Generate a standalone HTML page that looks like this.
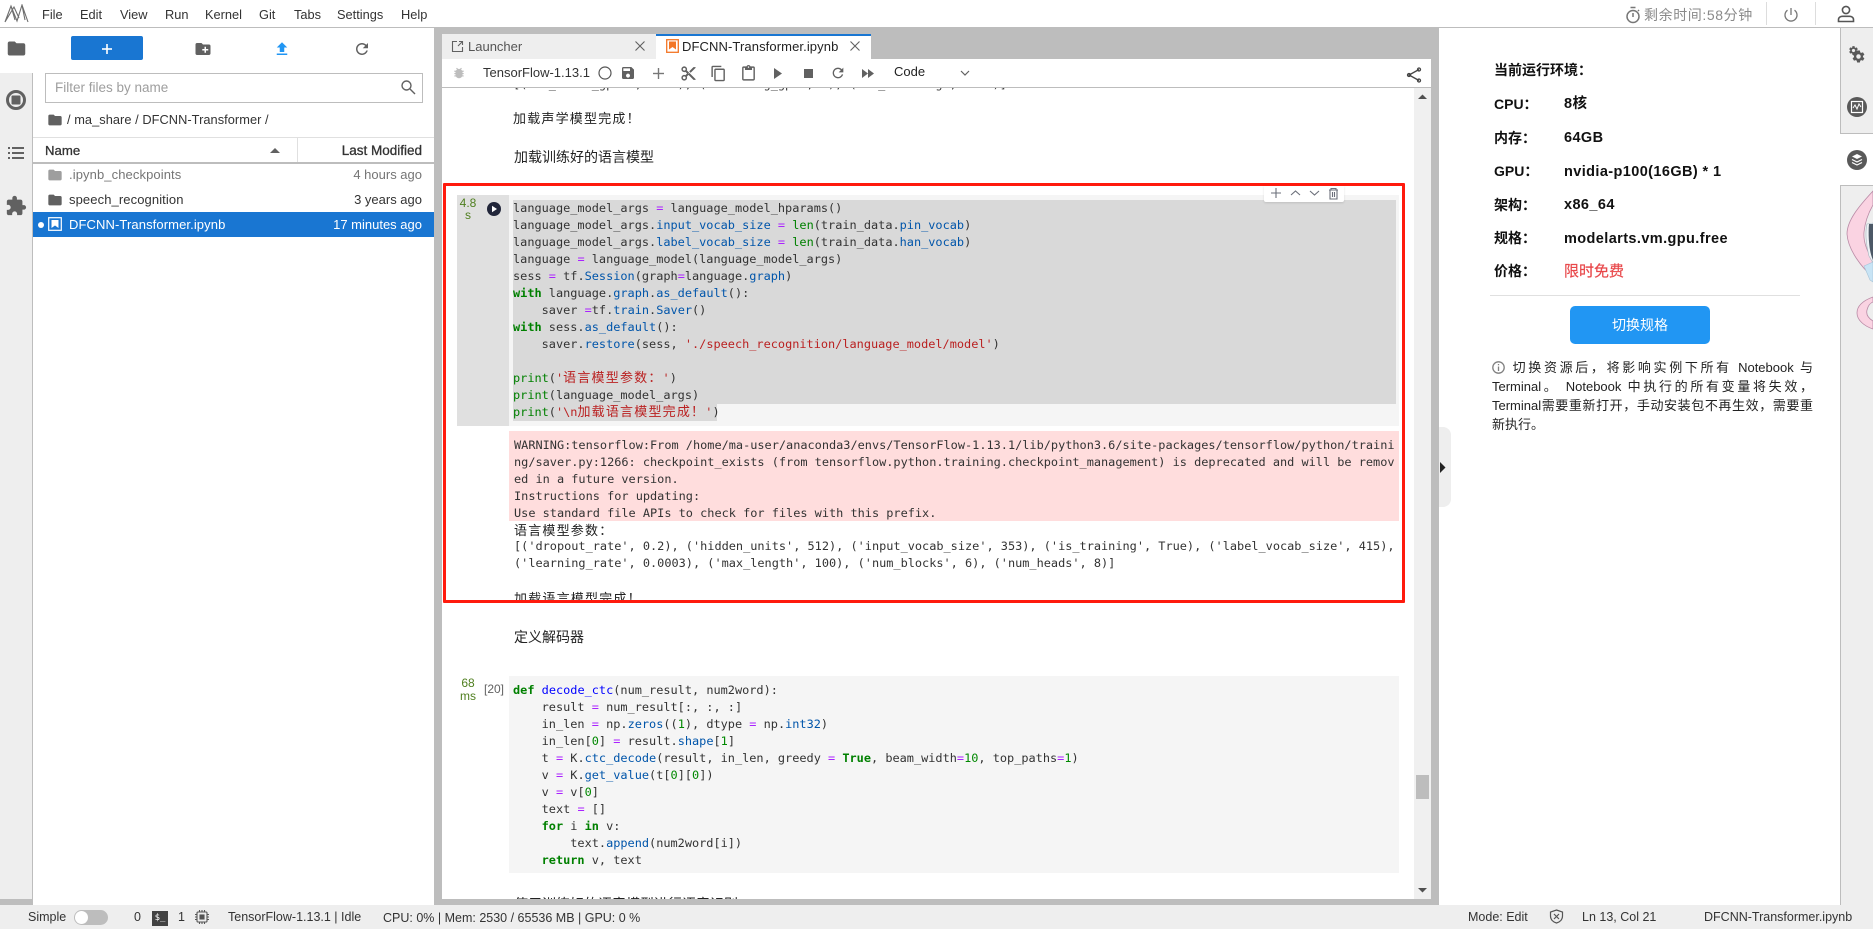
<!DOCTYPE html>
<html><head><meta charset="utf-8"><title>JupyterLab</title>
<style>
html,body{margin:0;padding:0;width:1873px;height:929px;overflow:hidden;background:#fff}
body{position:relative;font-family:"Liberation Sans","Noto Sans CJK SC",sans-serif;font-size:13px;color:#222}
.a{position:absolute;white-space:pre}
svg{position:absolute;display:block}
.m{top:6px;line-height:18px;font-size:12.8px;color:#333}
.code div,.code{font-family:"DejaVu Sans Mono","Noto Sans CJK SC",monospace;font-size:11.9px;line-height:17px;color:#333}
.code div{height:17px;white-space:pre}
.code{position:absolute;white-space:nowrap}
.code i{font-style:normal;font-size:13px;letter-spacing:1.2px;line-height:0;font-family:"Noto Sans CJK SC",sans-serif}
.code i.u{position:relative;top:1.5px;color:#222}
.k{color:#008000;font-weight:bold}.b{color:#008000}.o{color:#a2f}.p{color:#05a}.s{color:#ba2121}.n{color:#080}.f{color:#00f}
.zh{font-size:14px;line-height:18px;color:#222}
.lab{left:1494px;font-size:14px;line-height:18px;font-weight:bold;color:#111}
.val{left:1564px;font-size:14.5px;line-height:18px;font-weight:bold;color:#111;letter-spacing:.4px}
.st{top:908px;line-height:18px;font-size:12.5px;color:#333}
</style></head><body>

<!-- top bar -->
<div class="a" style="left:0;top:27px;width:1873px;height:1px;background:#bdbdbd"></div>
<svg style="left:4px;top:4px" width="25" height="19" viewBox="0 0 25 19" fill="none" stroke="#6e6e6e" stroke-width="1.100"><path d="M1 18L7 2L13 17L18 1L24 18M1 18L10 3L15 14M7 2L11 16M18 1L13 17M18 1L21 16"/></svg>
<div class="a m" style="left:42px">File</div>
<div class="a m" style="left:80px">Edit</div>
<div class="a m" style="left:120px">View</div>
<div class="a m" style="left:165px">Run</div>
<div class="a m" style="left:205px">Kernel</div>
<div class="a m" style="left:259px">Git</div>
<div class="a m" style="left:294px">Tabs</div>
<div class="a m" style="left:337px">Settings</div>
<div class="a m" style="left:401px">Help</div>

<svg style="left:1625px;top:6px" width="16" height="18" viewBox="0 0 16 18" fill="none" stroke="#777" stroke-width="1.500"><circle cx="8" cy="10.500" r="6"/><path d="M8 7v4M5.500 1.500h5"/><path d="M13 4l1 1"/></svg>
<div class="a" style="left:1644px;top:6px;font-size:14px;line-height:18px;color:#8a8a8a;letter-spacing:.6px">剩余时间:58分钟</div>
<div class="a" style="left:1766px;top:2px;width:1px;height:23px;background:#ddd"></div>
<svg style="left:1783px;top:7px" width="16" height="16" viewBox="0 0 16 16" fill="none" stroke="#777" stroke-width="1.300"><path d="M8 1v7M4.500 3.200a6 6 0 1 0 7 0"/></svg>
<div class="a" style="left:1815px;top:2px;width:1px;height:23px;background:#ddd"></div>
<svg style="left:1837px;top:5px" width="18" height="18" viewBox="0 0 18 18" fill="none" stroke="#555" stroke-width="1.600"><circle cx="9" cy="5" r="3.600"/><path d="M1.500 16.500v-2c0-2 2-3.200 4-3.200h7c2 0 4 1.200 4 3.200v2z"/></svg>

<!-- left sidebar -->
<div class="a" style="left:0;top:73px;width:32px;height:826px;background:#eee;border-right:1px solid #bdbdbd"></div>
<div class="a" style="left:0;top:899px;width:33px;height:6px;background:#bdbdbd"></div>
<div class="a" style="left:0;top:28px;width:33px;height:45px;background:#fff"></div>
<svg style="left:6px;top:38px" width="21" height="21" viewBox="0 0 24 24" fill="#616161"><path d="M10 4H4c-1.100 0-2 .9-2 2v12c0 1.100.9 2 2 2h16c1.100 0 2-.9 2-2V8c0-1.100-.9-2-2-2h-8l-2-2z"/></svg>
<svg style="left:6px;top:90px" width="20" height="20" viewBox="0 0 20 20"><circle cx="10" cy="10" r="8.500" fill="none" stroke="#616161" stroke-width="3"/><rect x="5.500" y="5.500" width="9" height="9" rx="1" fill="#616161"/></svg>
<svg style="left:7px;top:145px" width="18" height="16" viewBox="0 0 18 16" fill="#616161"><rect x="1" y="2" width="2" height="2"/><rect x="5" y="2" width="12" height="2"/><rect x="1" y="7" width="2" height="2"/><rect x="5" y="7" width="12" height="2"/><rect x="1" y="12" width="2" height="2"/><rect x="5" y="12" width="12" height="2"/></svg>
<svg style="left:5px;top:195px" width="22" height="22" viewBox="0 0 24 24" fill="#616161"><path d="M20.500 11H19V7c0-1.100-.9-2-2-2h-4V3.500C13 2.120 11.880 1 10.500 1S8 2.120 8 3.500V5H4c-1.100 0-1.990.9-1.990 2v3.800H3.500c1.490 0 2.700 1.210 2.700 2.700s-1.210 2.700-2.700 2.700H2V20c0 1.100.9 2 2 2h3.800v-1.500c0-1.490 1.210-2.700 2.700-2.700 1.490 0 2.700 1.210 2.700 2.700V22H17c1.100 0 2-.9 2-2v-4h1.500c1.380 0 2.500-1.120 2.500-2.500S21.880 11 20.500 11z"/></svg>

<!-- file browser -->
<div class="a" style="left:71px;top:36px;width:72px;height:24px;background:#1976d2;border-radius:2px"></div>
<svg style="left:102px;top:44px" width="10" height="10" viewBox="0 0 10 10" fill="#fff"><rect x="4.200" y="0" width="1.600" height="10"/><rect x="0" y="4.200" width="10" height="1.600"/></svg>
<svg style="left:194px;top:40px" width="18" height="18" viewBox="0 0 24 24" fill="#616161"><path d="M20 6h-8l-2-2H4c-1.110 0-1.990.890-1.990 2L2 18c0 1.110.89 2 2 2h16c1.110 0 2-.89 2-2V8c0-1.110-.89-2-2-2zm-1 8h-3v3h-2v-3h-3v-2h3V9h2v3h3v2z"/></svg>
<svg style="left:273px;top:40px" width="18" height="18" viewBox="0 0 24 24" fill="#2196f3"><path d="M9 16h6v-6h4l-7-7-7 7h4zm-4 2h14v2H5z"/></svg>
<svg style="left:353px;top:40px" width="18" height="18" viewBox="0 0 24 24" fill="#616161"><path d="M17.650 6.350C16.200 4.900 14.210 4 12 4c-4.420 0-7.990 3.580-7.990 8s3.570 8 7.990 8c3.730 0 6.840-2.550 7.730-6h-2.080c-.82 2.330-3.040 4-5.650 4-3.310 0-6-2.690-6-6s2.690-6 6-6c1.660 0 3.140.69 4.220 1.780L13 11h7V4l-2.350 2.350z"/></svg>

<div class="a" style="left:45px;top:73px;width:376px;height:28px;border:1px solid #bdbdbd;box-sizing:content-box"></div>
<div class="a" style="left:55px;top:79px;font-size:13.5px;line-height:18px;color:#9e9e9e">Filter files by name</div>
<svg style="left:400px;top:79px" width="16" height="16" viewBox="0 0 16 16" fill="none" stroke="#616161" stroke-width="1.400"><circle cx="6.500" cy="6.500" r="4.500"/><path d="M10 10l5 5"/></svg>

<svg style="left:47px;top:112px" width="16" height="16" viewBox="0 0 24 24" fill="#616161"><path d="M10 4H4c-1.100 0-2 .9-2 2v12c0 1.100.9 2 2 2h16c1.100 0 2-.9 2-2V8c0-1.100-.9-2-2-2h-8l-2-2z"/></svg>
<div class="a" style="left:67px;top:111px;font-size:12.8px;line-height:18px;color:#333;letter-spacing:.05px">/ ma_share / DFCNN-Transformer /</div>

<div class="a" style="left:33px;top:137px;width:401px;height:1px;background:#e0e0e0"></div>
<div class="a" style="left:33px;top:162px;width:401px;height:1.500px;background:#bdbdbd"></div>
<div class="a" style="left:297px;top:138px;width:1px;height:24px;background:#e0e0e0"></div>
<div class="a" style="left:45px;top:142px;font-size:13.2px;line-height:18px;color:#333;-webkit-text-stroke:.3px #333">Name</div>
<svg style="left:270px;top:147px" width="10" height="6" viewBox="0 0 10 6" fill="#616161"><path d="M0 6l5-5 5 5z"/></svg>
<div class="a" style="right:1451px;top:142px;font-size:13.5px;line-height:18px;color:#333;-webkit-text-stroke:.3px #333">Last Modified</div>

<svg style="left:47px;top:167px" width="16" height="16" viewBox="0 0 24 24" fill="#9e9e9e"><path d="M10 4H4c-1.100 0-2 .9-2 2v12c0 1.100.9 2 2 2h16c1.100 0 2-.9 2-2V8c0-1.100-.9-2-2-2h-8l-2-2z"/></svg>
<div class="a" style="left:69px;top:166px;font-size:13px;line-height:18px;color:#757575;letter-spacing:.1px">.ipynb_checkpoints</div>
<div class="a" style="right:1451px;top:166px;font-size:13px;line-height:18px;color:#757575">4 hours ago</div>
<svg style="left:47px;top:192px" width="16" height="16" viewBox="0 0 24 24" fill="#616161"><path d="M10 4H4c-1.100 0-2 .9-2 2v12c0 1.100.9 2 2 2h16c1.100 0 2-.9 2-2V8c0-1.100-.9-2-2-2h-8l-2-2z"/></svg>
<div class="a" style="left:69px;top:191px;font-size:13px;line-height:18px;color:#333;letter-spacing:.1px">speech_recognition</div>
<div class="a" style="right:1451px;top:191px;font-size:13px;line-height:18px;color:#333">3 years ago</div>
<div class="a" style="left:33px;top:212px;width:401px;height:25px;background:#1976d2"></div>
<div class="a" style="left:38px;top:222px;width:6px;height:6px;border-radius:50%;background:#fff"></div>
<svg style="left:48px;top:217px" width="14" height="14" viewBox="0 0 14 14"><rect x=".7" y=".7" width="12.600" height="12.600" fill="none" stroke="#fff" stroke-width="1.200"/><path d="M3.500 3h7v8l-3.500-2.500L3.500 11z" fill="#fff"/></svg>
<div class="a" style="left:69px;top:216px;font-size:13px;line-height:18px;color:#fff;letter-spacing:.1px">DFCNN-Transformer.ipynb</div>
<div class="a" style="right:1451px;top:216px;font-size:13px;line-height:18px;color:#fff">17 minutes ago</div>

<!-- main gray frame -->
<div class="a" style="left:434px;top:28px;width:1005px;height:877px;background:#bdbdbd"></div>
<div class="a" style="left:442px;top:59px;width:989px;height:840px;background:#fff"></div>

<!-- tabs -->
<div class="a" style="left:442px;top:34px;width:214px;height:25px;background:#eee"></div>
<div class="a" style="left:656px;top:34px;width:215px;height:25px;background:#fff"></div>
<div class="a" style="left:656px;top:34px;width:215px;height:2px;background:#1976d2"></div>
<svg style="left:451px;top:40px" width="13" height="13" viewBox="0 0 13 13" fill="none" stroke="#616161" stroke-width="1.100"><path d="M6 1.500H1.500v10h10V7M7 6l4.500-4.500M8 1.500h3.500V5"/></svg>
<div class="a" style="left:468px;top:38px;font-size:13px;line-height:18px;color:#555">Launcher</div>
<svg style="left:635px;top:41px" width="10" height="10" viewBox="0 0 10 10" stroke="#616161" stroke-width="1.100"><path d="M.5.500l9 9M9.500.500l-9 9"/></svg>
<svg style="left:666px;top:39px" width="13" height="14" viewBox="0 0 13 14"><rect x=".7" y=".7" width="11.600" height="12.600" fill="#fff" stroke="#f37626" stroke-width="1.300"/><path d="M3 2.500h7v8L6.500 8 3 10.500z" fill="#f37626"/></svg>
<div class="a" style="left:682px;top:38px;font-size:13px;line-height:18px;color:#222;letter-spacing:.1px">DFCNN-Transformer.ipynb</div>
<svg style="left:850px;top:41px" width="10" height="10" viewBox="0 0 10 10" stroke="#616161" stroke-width="1.100"><path d="M.5.500l9 9M9.500.500l-9 9"/></svg>

<!-- toolbar -->
<div class="a" style="left:442px;top:87px;width:989px;height:1px;background:#bdbdbd"></div>
<svg style="left:452px;top:66px" width="14" height="14" viewBox="0 0 24 24" fill="#bdbdbd"><path d="M20 8h-2.810c-.45-.78-1.070-1.450-1.820-1.960L17 4.410 15.590 3l-2.170 2.170C12.960 5.060 12.490 5 12 5s-.96.06-1.410.17L8.410 3 7 4.410l1.620 1.630C7.880 6.550 7.260 7.220 6.810 8H4v2h2.090c-.05.33-.09.66-.09 1v1H4v2h2v1c0 .34.04.67.09 1H4v2h2.810c1.040 1.790 2.970 3 5.190 3s4.150-1.210 5.190-3H20v-2h-2.090c.05-.33.09-.66.09-1v-1h2v-2h-2v-1c0-.34-.04-.67-.09-1H20V8z"/></svg>
<div class="a" style="left:483px;top:64px;font-size:13px;line-height:18px;color:#333">TensorFlow-1.13.1</div>
<svg style="left:598px;top:66px" width="14" height="14" viewBox="0 0 14 14" fill="none" stroke="#555" stroke-width="1.200"><circle cx="7" cy="7" r="6"/></svg>
<svg style="left:620px;top:65px" width="16" height="16" viewBox="0 0 24 24" fill="#616161"><path d="M17 3H5c-1.110 0-2 .9-2 2v14c0 1.100.89 2 2 2h14c1.100 0 2-.9 2-2V7l-4-4zm-5 16c-1.660 0-3-1.340-3-3s1.340-3 3-3 3 1.340 3 3-1.340 3-3 3zm3-10H5V5h10v4z"/></svg>
<svg style="left:653px;top:68px" width="11" height="11" viewBox="0 0 11 11" fill="#777"><rect x="4.800" y="0" width="1.400" height="11"/><rect x="0" y="4.800" width="11" height="1.400"/></svg>
<svg style="left:680px;top:65px" width="17" height="17" viewBox="0 0 24 24" fill="#616161"><path d="M9.640 7.640c.23-.5.36-1.050.36-1.640 0-2.210-1.790-4-4-4S2 3.790 2 6s1.790 4 4 4c.59 0 1.140-.13 1.640-.36L10 12l-2.360 2.360C7.140 14.130 6.590 14 6 14c-2.210 0-4 1.790-4 4s1.790 4 4 4 4-1.790 4-4c0-.59-.13-1.140-.36-1.640L12 14l7 7h3v-1L9.640 7.640zM6 8c-1.100 0-2-.89-2-2s.9-2 2-2 2 .89 2 2-.9 2-2 2zm0 12c-1.100 0-2-.89-2-2s.9-2 2-2 2 .89 2 2-.9 2-2 2zm6-7.500c-.28 0-.5-.22-.5-.5s.22-.5.5-.5.5.22.5.5-.22.5-.5.5zM19 3l-6 6 2 2 7-7V3z"/></svg>
<svg style="left:710px;top:65px" width="17" height="17" viewBox="0 0 24 24" fill="#616161"><path d="M16 1H4c-1.100 0-2 .9-2 2v14h2V3h12V1zm3 4H8c-1.100 0-2 .9-2 2v14c0 1.100.9 2 2 2h11c1.100 0 2-.9 2-2V7c0-1.100-.9-2-2-2zm0 16H8V7h11v14z"/></svg>
<svg style="left:740px;top:65px" width="17" height="17" viewBox="0 0 24 24" fill="#616161"><path d="M19 2h-4.180C14.400.84 13.300 0 12 0c-1.300 0-2.400.84-2.820 2H5c-1.100 0-2 .9-2 2v16c0 1.100.9 2 2 2h14c1.100 0 2-.9 2-2V4c0-1.100-.9-2-2-2zm-7 0c.55 0 1 .45 1 1s-.45 1-1 1-1-.45-1-1 .45-1 1-1zm7 18H5V4h2v3h10V4h2v16z"/></svg>
<svg style="left:774px;top:68px" width="9" height="11" viewBox="0 0 9 11" fill="#616161"><path d="M0 0l8 5.500L0 11z"/></svg>
<div class="a" style="left:804px;top:69px;width:9px;height:9px;background:#616161"></div>
<svg style="left:830px;top:65px" width="16" height="16" viewBox="0 0 24 24" fill="#616161"><path d="M17.650 6.350C16.200 4.900 14.210 4 12 4c-4.420 0-7.990 3.580-7.990 8s3.570 8 7.990 8c3.730 0 6.840-2.550 7.730-6h-2.080c-.82 2.330-3.040 4-5.650 4-3.310 0-6-2.690-6-6s2.690-6 6-6c1.660 0 3.140.69 4.220 1.780L13 11h7V4l-2.350 2.350z"/></svg>
<svg style="left:862px;top:69px" width="12" height="9" viewBox="0 0 12 9" fill="#616161"><path d="M0 0l6 4.500L0 9zM6 0l6 4.500L6 9z"/></svg>
<div class="a" style="left:894px;top:63px;font-size:13px;line-height:18px;color:#222">Code</div>
<svg style="left:960px;top:70px" width="10" height="7" viewBox="0 0 10 7" fill="none" stroke="#616161" stroke-width="1.200"><path d="M1 1l4 4 4-4"/></svg>
<svg style="left:1406px;top:67px" width="16" height="16" viewBox="0 0 16 16" fill="none" stroke="#444" stroke-width="1.300"><path d="M13 2.500L3 8l10 5.500"/><circle cx="13" cy="2.500" r="1.500"/><circle cx="3" cy="8" r="1.500"/><circle cx="13" cy="13.500" r="1.500"/></svg>

<!-- notebook content -->
<div class="a" style="left:0;top:88px;width:1414px;height:811px;overflow:hidden">
<div class="a" style="left:0;top:-88px;width:1414px;height:929px">

<div class="code" style="left:513px;top:76px">[('am_model_gpus', 1024), ('learning_gpu', 4), ('is_training', True)]</div>
<div class="code" style="left:513px;top:109px"><i class="u">加载声学模型完成！</i></div>
<div class="a zh" style="left:514px;top:148px">加载训练好的语言模型</div>

<!-- cell 1 -->
<div class="a" style="left:457px;top:195px;width:52px;height:231px;background:#e0e0e0"></div>
<div class="a" style="left:509px;top:195px;width:890px;height:231px;background:#f5f5f5"></div>
<div class="a" style="left:513px;top:200px;width:883px;height:204px;background:#d9d9d9"></div>
<div class="a" style="left:513px;top:404px;width:204px;height:17px;background:#d9d9d9"></div>
<div class="a" style="left:457px;top:196px;width:22px;text-align:center;font-size:12px;line-height:14px;color:#4f7f1f">4.8</div>
<div class="a" style="left:457px;top:208px;width:22px;text-align:center;font-size:12px;line-height:14px;color:#4f7f1f">s</div>
<svg style="left:487px;top:202px" width="14" height="14" viewBox="0 0 14 14"><circle cx="7" cy="7" r="7" fill="#22263a"/><path d="M5 3.800l5 3.200-5 3.200z" fill="#fff"/></svg>
<div class="code" style="left:513px;top:200px"><div>language_model_args <span class="o">=</span> language_model_hparams()</div><div>language_model_args.<span class="p">input_vocab_size</span> <span class="o">=</span> <span class="b">len</span>(train_data.<span class="p">pin_vocab</span>)</div><div>language_model_args.<span class="p">label_vocab_size</span> <span class="o">=</span> <span class="b">len</span>(train_data.<span class="p">han_vocab</span>)</div><div>language <span class="o">=</span> language_model(language_model_args)</div><div>sess <span class="o">=</span> tf.<span class="p">Session</span>(graph<span class="o">=</span>language.<span class="p">graph</span>)</div><div><span class="k">with</span> language.<span class="p">graph</span>.<span class="p">as_default</span>():</div><div>    saver <span class="o">=</span>tf.<span class="p">train</span>.<span class="p">Saver</span>()</div><div><span class="k">with</span> sess.<span class="p">as_default</span>():</div><div>    saver.<span class="p">restore</span>(sess, <span class="s">'./speech_recognition/language_model/model'</span>)</div><div> </div><div><span class="b">print</span>(<span class="s">'<i>语言模型参数：</i>'</span>)</div><div><span class="b">print</span>(language_model_args)</div><div><span class="b">print</span>(<span class="s">'\n<i>加载语言模型完成！</i>'</span>)</div></div>

<!-- output -->
<div class="a" style="left:509px;top:431px;width:890px;height:90px;background:#fdd"></div>
<div class="code" style="left:514px;top:437px"><div>WARNING:tensorflow:From /home/ma-user/anaconda3/envs/TensorFlow-1.13.1/lib/python3.6/site-packages/tensorflow/python/traini</div><div>ng/saver.py:1266: checkpoint_exists (from tensorflow.python.training.checkpoint_management) is deprecated and will be remov</div><div>ed in a future version.</div><div>Instructions for updating:</div><div>Use standard file APIs to check for files with this prefix.</div></div>
<div class="code" style="left:514px;top:521px"><div><i class="u">语言模型参数：</i></div><div>[('dropout_rate', 0.2), ('hidden_units', 512), ('input_vocab_size', 353), ('is_training', True), ('label_vocab_size', 415),</div><div>('learning_rate', 0.0003), ('max_length', 100), ('num_blocks', 6), ('num_heads', 8)]</div><div> </div><div><i class="u">加载语言模型完成！</i></div></div>
<div class="a" style="left:447px;top:600px;width:955px;height:12px;background:#fff"></div>

<!-- red box -->
<div class="a" style="left:443px;top:183px;width:956px;height:414px;border:3px solid #ff1a0d;border-radius:1px"></div>

<!-- cell toolbar -->
<div class="a" style="left:1264px;top:186px;width:80px;height:16px;background:#fff;border-radius:0 0 2px 2px;box-shadow:0 1px 2px rgba(0,0,0,.12)"></div>
<svg style="left:1270px;top:186px" width="70" height="14" viewBox="0 0 70 14" fill="none" stroke="#6b6f7a" stroke-width="1.100"><path d="M6 2v10M1 7h10M21 9l4.500-4 4.500 4M40 5l4.500 4L49 5"/><path d="M59 4h9M61 4V2.500h5V4M60 4v9h7V4M62.500 6v5M64.500 6v5"/></svg>

<div class="a zh" style="left:514px;top:628px">定义解码器</div>

<!-- cell 2 -->
<div class="a" style="left:509px;top:676px;width:890px;height:197px;background:#f5f5f5"></div>
<div class="a" style="left:457px;top:676px;width:22px;text-align:center;font-size:12px;line-height:14px;color:#4f7f1f">68</div>
<div class="a" style="left:457px;top:689px;width:22px;text-align:center;font-size:12px;line-height:14px;color:#4f7f1f">ms</div>
<div class="a" style="left:484px;top:682px;font-size:12px;line-height:14px;color:#616161">[20]</div>
<div class="code" style="left:513px;top:682px"><div><span class="k">def</span> <span class="f">decode_ctc</span>(num_result, num2word):</div><div>    result <span class="o">=</span> num_result[:, :, :]</div><div>    in_len <span class="o">=</span> np.<span class="p">zeros</span>((<span class="n">1</span>), dtype <span class="o">=</span> np.<span class="p">int32</span>)</div><div>    in_len[<span class="n">0</span>] <span class="o">=</span> result.<span class="p">shape</span>[<span class="n">1</span>]</div><div>    t <span class="o">=</span> K.<span class="p">ctc_decode</span>(result, in_len, greedy <span class="o">=</span> <span class="k">True</span>, beam_width<span class="o">=</span><span class="n">10</span>, top_paths<span class="o">=</span><span class="n">1</span>)</div><div>    v <span class="o">=</span> K.<span class="p">get_value</span>(t[<span class="n">0</span>][<span class="n">0</span>])</div><div>    v <span class="o">=</span> v[<span class="n">0</span>]</div><div>    text <span class="o">=</span> []</div><div>    <span class="k">for</span> i <span class="k">in</span> v:</div><div>        text.<span class="p">append</span>(num2word[i])</div><div>    <span class="k">return</span> v, text</div></div>
<div class="a zh" style="left:514px;top:895px">使用训练好的语音模型进行语音识别</div>

</div></div>

<!-- notebook scrollbar -->
<div class="a" style="left:1414px;top:88px;width:17px;height:811px;background:#f0f0f0"></div>
<svg style="left:1418px;top:94px" width="9" height="6" viewBox="0 0 9 6" fill="#505050"><path d="M0 5l4.500-4.500L9 5z"/></svg>
<div class="a" style="left:1416px;top:775px;width:13px;height:24px;background:#bdbdbd"></div>
<svg style="left:1418px;top:887px" width="9" height="6" viewBox="0 0 9 6" fill="#505050"><path d="M0 1l4.500 4.500L9 1z"/></svg>

<!-- right panel -->
<div class="a" style="left:1439px;top:427px;width:12px;height:80px;background:#eee;border-radius:0 8px 8px 0"></div>
<svg style="left:1440px;top:462px" width="6" height="11" viewBox="0 0 6 11" fill="#222"><path d="M0 0l5.500 5.500L0 11z"/></svg>

<div class="a lab" style="top:61px">当前运行环境：</div>
<div class="a lab" style="top:95px">CPU：</div><div class="a val" style="top:95px">8核</div>
<div class="a lab" style="top:129px">内存：</div><div class="a val" style="top:129px">64GB</div>
<div class="a lab" style="top:162px">GPU：</div><div class="a val" style="top:163px">nvidia-p100(16GB) * 1</div>
<div class="a lab" style="top:196px">架构：</div><div class="a val" style="top:196px">x86_64</div>
<div class="a lab" style="top:229px">规格：</div><div class="a val" style="top:230px">modelarts.vm.gpu.free</div>
<div class="a lab" style="top:262px">价格：</div><div class="a val" style="top:263px;color:#e8474a;font-size:15px;letter-spacing:0;font-weight:normal;-webkit-text-stroke:.2px #e8474a">限时免费</div>
<div class="a" style="left:1490px;top:295px;width:310px;height:1px;background:#e0e0e0"></div>
<div class="a" style="left:1570px;top:306px;width:140px;height:38px;background:#2196f3;border-radius:5px;color:#fff;text-align:center;line-height:38px;font-size:14px">切换规格</div>
<svg style="left:1492px;top:361px" width="13" height="13" viewBox="0 0 13 13" fill="none" stroke="#808080" stroke-width="1.300"><circle cx="6.500" cy="6.500" r="5.700"/><path d="M6.500 5.500v4.500M6.500 3v1.300"/></svg>
<div style="position:absolute;left:1492px;top:357.5px;width:321px;font-size:13px;line-height:19px;color:#222;text-align:justify"><span style="display:inline-block;width:18px"></span>切换资源后，将影响实例下所有 Notebook 与 Terminal。 Notebook 中执行的所有变量将失效，Terminal需要重新打开，手动安装包不再生效，需要重新执行。</div>

<!-- right strip -->
<div class="a" style="left:1840px;top:28px;width:33px;height:877px;background:#eee;border-left:1px solid #bdbdbd;box-sizing:border-box"></div>
<div class="a" style="left:1841px;top:133px;width:32px;height:53px;background:#fff;border-top:1px solid #bdbdbd;border-bottom:1px solid #bdbdbd;box-sizing:border-box"></div>
<div class="a" style="left:1840px;top:134px;width:1px;height:51px;background:#fff"></div>
<svg style="left:1848px;top:45px" width="11" height="11" viewBox="0 0 24 24" fill="#595959"><path d="M19.140 12.940c.04-.3.060-.61.060-.94 0-.32-.02-.64-.07-.94l2.030-1.580c.18-.14.230-.41.120-.61l-1.920-3.320c-.12-.22-.37-.29-.59-.22l-2.390.96c-.5-.38-1.030-.7-1.620-.94l-.36-2.540c-.04-.24-.24-.41-.48-.41h-3.840c-.24 0-.43.170-.47.41l-.36 2.540c-.59.24-1.130.57-1.620.94l-2.390-.96c-.22-.08-.47 0-.59.22L2.740 8.870c-.12.210-.08.470.12.610l2.030 1.580c-.05.3-.09.63-.09.94s.02.64.07.94l-2.030 1.580c-.18.14-.23.41-.12.61l1.920 3.320c.12.22.37.29.59.22l2.390-.96c.5.38 1.030.7 1.620.94l.36 2.540c.05.24.24.41.48.41h3.840c.24 0 .44-.17.47-.41l.36-2.540c.59-.24 1.130-.56 1.620-.94l2.390.96c.22.08.47 0 .59-.22l1.920-3.320c.12-.22.070-.47-.12-.61l-2.010-1.580zM12 15.600c-1.980 0-3.600-1.620-3.600-3.600s1.620-3.600 3.600-3.600 3.600 1.620 3.600 3.600-1.620 3.600-3.600 3.600z"/></svg>
<svg style="left:1851px;top:49px" width="15" height="15" viewBox="0 0 24 24" fill="#595959"><path d="M19.140 12.940c.04-.3.060-.61.060-.94 0-.32-.02-.64-.07-.94l2.030-1.580c.18-.14.230-.41.120-.61l-1.920-3.320c-.12-.22-.37-.29-.59-.22l-2.390.96c-.5-.38-1.030-.7-1.620-.94l-.36-2.540c-.04-.24-.24-.41-.48-.41h-3.840c-.24 0-.43.170-.47.41l-.36 2.540c-.59.24-1.130.57-1.620.94l-2.390-.96c-.22-.08-.47 0-.59.22L2.740 8.870c-.12.210-.08.470.12.610l2.030 1.580c-.05.3-.09.63-.09.94s.02.64.07.94l-2.030 1.580c-.18.14-.23.41-.12.61l1.920 3.320c.12.22.37.29.59.22l2.390-.96c.5.38 1.030.7 1.620.94l.36 2.540c.05.24.24.41.48.41h3.840c.24 0 .44-.17.47-.41l.36-2.540c.59-.24 1.130-.56 1.620-.94l2.390.96c.22.08.47 0 .59-.22l1.920-3.320c.12-.22.070-.47-.12-.61l-2.010-1.580zM12 15.600c-1.980 0-3.600-1.620-3.600-3.600s1.620-3.600 3.600-3.600 3.600 1.620 3.600 3.600-1.620 3.600-3.600 3.600z"/></svg>
<svg style="left:1847px;top:97px" width="20" height="20" viewBox="0 0 20 20"><circle cx="10" cy="10" r="10" fill="#595959"/><rect x="4.500" y="4.500" width="11" height="11" fill="none" stroke="#fff" stroke-width="1.200"/><path d="M6 11l2-3 2 4 2-5 2 3" fill="none" stroke="#fff" stroke-width="1"/></svg>
<svg style="left:1847px;top:150px" width="20" height="20" viewBox="0 0 20 20"><circle cx="10" cy="10" r="10" fill="#595959"/><path d="M10 4l5 2.500L10 9 5 6.500z" fill="#fff"/><path d="M5 9.500L10 12l5-2.500M5 12.500L10 15l5-2.500" fill="none" stroke="#fff" stroke-width="1.200"/></svg>
<svg style="left:1841px;top:186px" width="32" height="160" viewBox="1841 186 32 160">
<path d="M1873 191C1860 205 1847 220 1847 234C1848 250 1862 268 1873 277L1873 262C1868 252 1863 243 1864 232C1865 222 1869 212 1873 205Z" fill="#fad3e2" stroke="#b98ba6" stroke-width=".8"/>
<path d="M1873 223L1867 224C1865 232 1866 245 1869 256L1873 263Z" fill="#eef3f6" stroke="#a7b6c0" stroke-width=".6"/>
<path d="M1873 224L1869 224C1868 235 1869 252 1873 260Z" fill="#4c5866"/>
<path d="M1873 262L1864 266L1870 280L1873 282Z" fill="#c8e4f5" stroke="#a7c4d8" stroke-width=".6"/>
<path d="M1873 297C1862 301 1857 306 1857 313C1857 320 1864 326 1873 329L1873 321C1868 318 1866 314 1867 310C1868 306 1870 303 1873 302Z" fill="#fad3e2" stroke="#b98ba6" stroke-width=".8"/>
</svg>

<!-- status bar -->
<div class="a" style="left:0;top:905px;width:1873px;height:24px;background:#eee"></div>
<div class="a st" style="left:28px">Simple</div>
<div class="a" style="left:74px;top:910px;width:34px;height:15px;background:#bdbdbd;border-radius:8px"></div>
<div class="a" style="left:75px;top:911px;width:13px;height:13px;background:#fff;border-radius:50%"></div>
<div class="a st" style="left:134px">0</div>
<div class="a" style="left:152px;top:911px;width:16px;height:15px;background:#424242;color:#fff;font-size:9px;line-height:15px;text-align:center;font-family:'DejaVu Sans Mono',monospace">$_</div>
<div class="a st" style="left:178px">1</div>
<svg style="left:194px;top:909px" width="16" height="16" viewBox="0 0 16 16" fill="none" stroke="#555" stroke-width="1.100"><rect x="3" y="3" width="10" height="10" rx="1"/><rect x="6" y="6" width="4" height="4" fill="#555"/><path d="M5.500 1v2M8 1v2M10.500 1v2M5.500 13v2M8 13v2M10.500 13v2M1 5.500h2M1 8h2M1 10.500h2M13 5.500h2M13 8h2M13 10.500h2"/></svg>
<div class="a st" style="left:228px">TensorFlow-1.13.1 | Idle</div>
<div class="a st" style="left:383px;top:909px">CPU: 0% | Mem: 2530 / 65536 MB | GPU: 0 %</div>
<div class="a st" style="left:1468px">Mode: Edit</div>
<svg style="left:1549px;top:909px" width="15" height="15" viewBox="0 0 15 15" fill="none" stroke="#555" stroke-width="1.200"><path d="M7.500 1l6 2v4c0 3.500-2.500 6-6 7-3.500-1-6-3.500-6-7V3z"/><path d="M5 5l5 5M10 5l-5 5"/></svg>
<div class="a st" style="left:1582px">Ln 13, Col 21</div>
<div class="a st" style="left:1704px">DFCNN-Transformer.ipynb</div>

</body></html>
